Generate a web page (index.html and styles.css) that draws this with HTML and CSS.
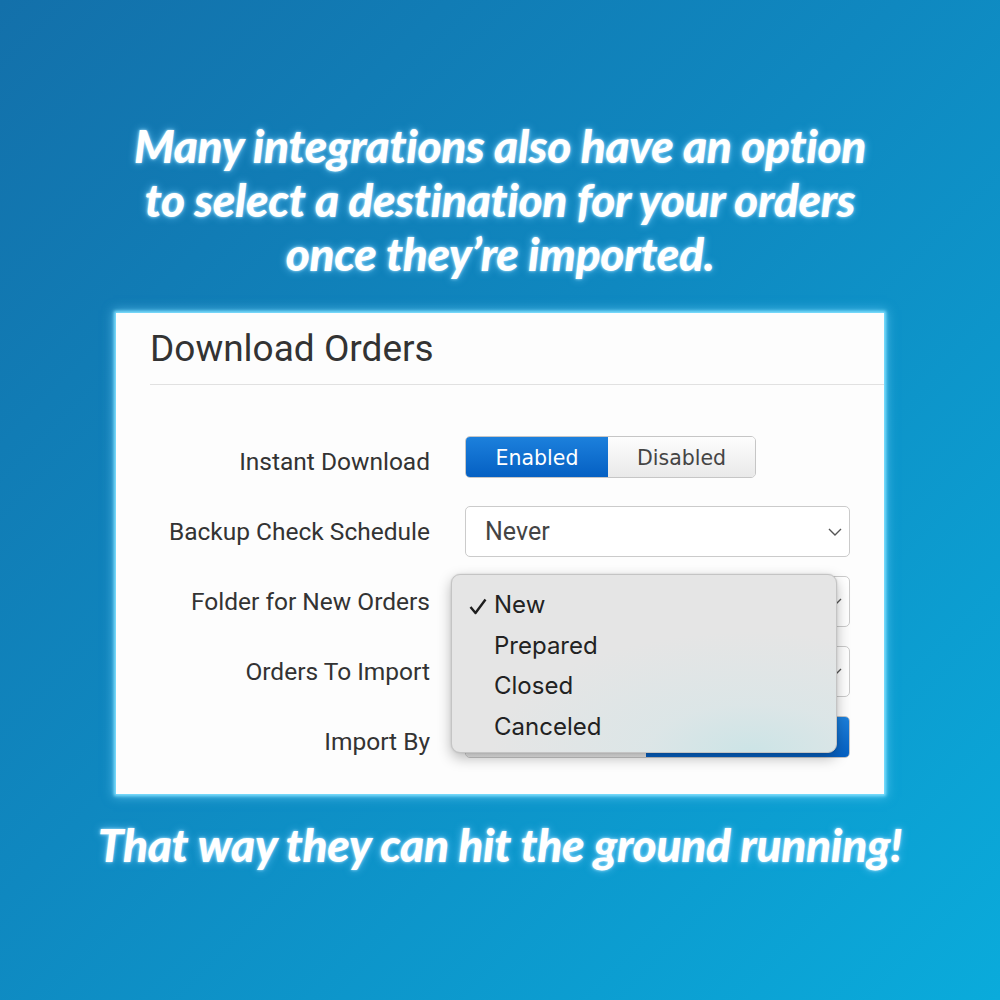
FILE: index.html
```html
<!DOCTYPE html>
<html>
<head>
<meta charset="utf-8">
<link rel="stylesheet" href="styles.css">
</head>
<body>
<div class="page">
  <h1 class="headline">Many integrations also have an option<br>to select a destination for your orders<br>once they’re imported.</h1>
  <div class="card">
    <div class="card-header">Download Orders</div>
    <div class="form">
      <div class="row">
        <div class="label">Instant Download</div>
        <div class="control">
          <div class="toggle">
            <span class="seg seg-on seg-enabled">Enabled</span>
            <span class="seg seg-off seg-disabled">Disabled</span>
          </div>
        </div>
      </div>
      <div class="row">
        <div class="label">Backup Check Schedule</div>
        <div class="control">
          <div class="select"><span>Never</span>
            <svg class="chev" width="14" height="8" viewBox="0 0 14 8"><polyline points="1,1 7,7 13,1" fill="none" stroke="#555" stroke-width="1.4"/></svg>
          </div>
        </div>
      </div>
      <div class="row">
        <div class="label">Folder for New Orders</div>
        <div class="control">
          <div class="select"><span></span>
            <svg class="chev" width="14" height="8" viewBox="0 0 14 8"><polyline points="1,1 7,7 13,1" fill="none" stroke="#555" stroke-width="1.4"/></svg>
          </div>
          <div class="menu">
            <div class="item"><svg class="check" width="18" height="17" viewBox="0 0 18 17"><polyline points="1.5,9 6.5,15 16.5,1.5" fill="none" stroke="#1e1e1e" stroke-width="2.4" stroke-linejoin="round"/></svg>New</div>
            <div class="item">Prepared</div>
            <div class="item">Closed</div>
            <div class="item">Canceled</div>
          </div>
        </div>
      </div>
      <div class="row">
        <div class="label">Orders To Import</div>
        <div class="control">
          <div class="select"><span></span>
            <svg class="chev" width="14" height="8" viewBox="0 0 14 8"><polyline points="1,1 7,7 13,1" fill="none" stroke="#555" stroke-width="1.4"/></svg>
          </div>
        </div>
      </div>
      <div class="row">
        <div class="label">Import By</div>
        <div class="control">
          <div class="toggle toggle-wide">
            <span class="seg seg-off seg-left"></span>
            <span class="seg seg-on seg-right"></span>
          </div>
        </div>
      </div>
    </div>
  </div>
  <p class="tagline">That way they can hit the ground running!</p>
</div>
</body>
</html>
```
FILE: styles.css
```css
html, body {
  margin: 0;
  padding: 0;
}
body {
  width: 1000px;
  height: 1000px;
  overflow: hidden;
  background: linear-gradient(135deg, #1370aa 0%, #0f88c0 45%, #0aabdb 100%);
}
.page {
  width: 1000px;
  height: 1000px;
  display: flex;
  flex-direction: column;
  align-items: center;
}
.headline, .tagline {
  font-family: Lato, "Open Sans", sans-serif;
  font-style: italic;
  font-weight: 900;
  color: #fff;
  text-align: center;
  font-size: 46px;
  line-height: 54px;
  letter-spacing: -0.3px;
  text-shadow: 0 0 3px rgba(190, 235, 255, 0.95), 0 0 9px rgba(110, 205, 255, 0.8);
  margin: 0;
  white-space: nowrap;
}
.headline {
  margin-top: 119px;
}
.tagline {
  margin-top: 24px;
}
.card {
  margin-top: 32px;
  width: 768px;
  height: 481px;
  box-sizing: border-box;
  background: #fdfdfd;
  box-shadow: 0 0 3px 2px #7fe0ff, 0 0 10px 3px rgba(120, 215, 255, 0.55);
  font-family: Roboto, "Liberation Sans", sans-serif;
  color: #333;
}
.card-header {
  margin-left: 34px;
  padding-top: 16px;
  padding-bottom: 15px;
  font-size: 37px;
  line-height: 40px;
  color: #333;
  border-bottom: 1px solid #e1e1e1;
}
.form {
  padding-top: 51px;
  display: flex;
  flex-direction: column;
  gap: 19px;
}
.row {
  display: flex;
  height: 51px;
}
.label {
  width: 314px;
  text-align: right;
  font-size: 24.5px;
  line-height: 51px;
  color: #333;
}
.control {
  position: relative;
  margin-left: 35px;
  width: 385px;
}
.toggle {
  display: flex;
  width: 291px;
  height: 42px;
  box-sizing: border-box;
  border-radius: 5px;
  overflow: hidden;
  border: 1px solid #c6c6c6;
  font-family: "DejaVu Sans", Verdana, sans-serif;
  font-size: 20.5px;
}
.toggle-wide {
  width: 385px;
}
.seg {
  display: flex;
  align-items: center;
  justify-content: center;
  padding-top: 2px;
}
.seg-on {
  background: linear-gradient(#1c80dc, #0560c3);
  color: #fff;
}
.seg-off {
  background: linear-gradient(#fdfdfd, #e9e9e9);
  color: #444;
}
.seg-enabled { width: 142px; }
.seg-disabled { flex: 1; }
.seg-left { width: 180px; }
.seg-right { flex: 1; }
.select {
  height: 51px;
  box-sizing: border-box;
  border: 1px solid #cbcbcb;
  border-radius: 5px;
  background: #fff;
  display: flex;
  align-items: center;
  justify-content: space-between;
  padding: 0 7px 0 19px;
  font-size: 25px;
  color: #444;
}
.chev {
  display: block;
}
.menu {
  position: absolute;
  left: -14px;
  top: -2px;
  width: 386px;
  height: 179px;
  box-sizing: border-box;
  padding-top: 10px;
  border: 1px solid #c4c4c4;
  border-radius: 9px;
  background:
    radial-gradient(ellipse 260px 120px at 78% 100%, rgba(204, 228, 230, 1) 0%, rgba(214, 230, 232, 0.6) 40%, rgba(229, 229, 229, 0) 100%),
    #e5e5e5;
  box-shadow: 0 5px 14px rgba(0, 0, 0, 0.28), 0 0 2px rgba(0, 0, 0, 0.15);
  font-family: Inter, "Noto Sans", sans-serif;
  font-size: 24px;
  color: #222;
  z-index: 2;
}
.item {
  position: relative;
  height: 40.5px;
  line-height: 40.5px;
  padding-left: 42px;
}
.check {
  position: absolute;
  left: 17px;
  top: 13px;
}
```
